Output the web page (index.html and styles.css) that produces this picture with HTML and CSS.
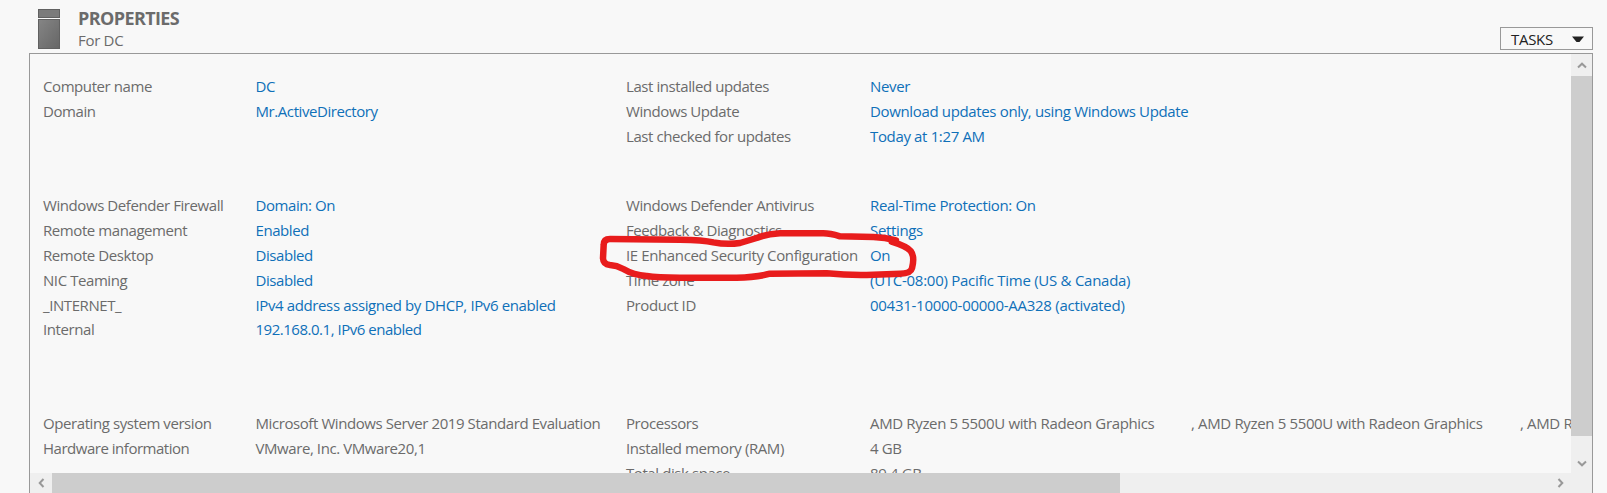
FILE: index.html
```html
<!DOCTYPE html>
<html lang="en">
<head>
<meta charset="utf-8">
<title>Properties</title>
<link rel="stylesheet" href="styles.css">
</head>
<body>
<header class="header">
  <svg class="server" viewBox="0 0 22 40" width="22" height="40">
    <defs><linearGradient id="g" x1="0" y1="0" x2="1" y2="1"><stop offset="0" stop-color="#858585"/><stop offset="1" stop-color="#666"/></linearGradient></defs>
    <rect x=".5" y=".5" width="21" height="8" fill="#7b7b7b" stroke="#616161"/>
    <rect x=".5" y="10.5" width="21" height="29" fill="url(#g)" stroke="#616161"/>
  </svg>
  <div class="titles">
    <h1 class="title">PROPERTIES</h1>
    <div class="subtitle">For DC</div>
  </div>
  <button class="tasks"><span>TASKS</span><svg width="12" height="7" viewBox="0 0 12 7"><path d="M0 .5H12L7.500 6H4.500Z" fill="#222"/></svg></button>
</header>
<main class="panel">
  <div class="view">
    <section class="group first">
      <dl class="list left">
        <dt>Computer name</dt><dd class="link">DC</dd>
        <dt>Domain</dt><dd class="link">Mr.ActiveDirectory</dd>
      </dl>
      <dl class="list right">
        <dt>Last installed updates</dt><dd class="link">Never</dd>
        <dt>Windows Update</dt><dd class="link">Download updates only, using Windows Update</dd>
        <dt>Last checked for updates</dt><dd class="link">Today at 1:27 AM</dd>
      </dl>
    </section>
    <section class="group second">
      <dl class="list left adapters">
        <dt>Windows Defender Firewall</dt><dd class="link">Domain: On</dd>
        <dt>Remote management</dt><dd class="link">Enabled</dd>
        <dt>Remote Desktop</dt><dd class="link">Disabled</dd>
        <dt>NIC Teaming</dt><dd class="link">Disabled</dd>
        <dt>_INTERNET_</dt><dd class="link address">IPv4 address assigned by DHCP, IPv6 enabled</dd>
        <dt>Internal</dt><dd class="link numeric">192.168.0.1, IPv6 enabled</dd>
      </dl>
      <dl class="list right">
        <dt>Windows Defender Antivirus</dt><dd class="link">Real-Time Protection: On</dd>
        <dt>Feedback &amp; Diagnostics</dt><dd class="link">Settings</dd>
        <dt class="address">IE Enhanced Security Configuration</dt><dd class="link">On</dd>
        <dt>Time zone</dt><dd class="link wide">(UTC-08:00) Pacific Time (US &amp; Canada)</dd>
        <dt>Product ID</dt><dd class="link wide">00431-10000-00000-AA328 (activated)</dd>
      </dl>
    </section>
    <section class="group third">
      <dl class="list left">
        <dt>Operating system version</dt><dd>Microsoft Windows Server 2019 Standard Evaluation</dd>
        <dt class="numeric">Hardware information</dt><dd>VMware, Inc. VMware20,1</dd>
      </dl>
      <dl class="list right">
        <dt>Processors</dt><dd class="cpus"><span class="cpu">AMD Ryzen 5 5500U with Radeon Graphics</span><span class="cpu next">, AMD Ryzen 5 5500U with Radeon Graphics</span><span class="cpu next">, AMD R</span></dd>
        <dt>Installed memory (RAM)</dt><dd>4 GB</dd>
        <dt>Total disk space</dt><dd>89.4 GB</dd>
      </dl>
    </section>
  </div>
  <div class="vbar">
    <div class="arrow"><svg width="10" height="7" viewBox="0 0 10 7"><path d="M1 5.500L5 1.700L9 5.500"/></svg></div>
    <div class="vthumb"></div>
    <div class="arrow down"><svg width="10" height="7" viewBox="0 0 10 7"><path d="M1 1.500L5 5.300L9 1.500"/></svg></div>
  </div>
  <div class="hbar">
    <div class="arrow"><svg width="7" height="10" viewBox="0 0 7 10"><path d="M5.500 1L1.700 5L5.500 9"/></svg></div>
    <div class="hthumb"></div>
    <div class="arrow end"><svg width="7" height="10" viewBox="0 0 7 10"><path d="M1.500 1L5.300 5L1.500 9"/></svg></div>
  </div>
</main>
<svg class="marker" viewBox="0 0 1080 240" width="360" height="80">
  <path d="M948 76Q915 67 880 66L780 64Q750 55 730 55L600 55Q560 57 530 69L480 84Q440 90 400 82Q370 75 300 74L90 72Q71 72 71 90L69 130Q70 148 90 150Q110 151 130 162Q160 180 200 183Q230 188 300 188L470 188Q530 187 570 176L740 175Q800 181 860 180L960 176Q992 176 996 160Q1005 125 992 108Q980 94 935 80"/>
</svg>
</body>
</html>
```
FILE: styles.css
```css
* { box-sizing: border-box; }
body {
  margin: 0;
  width: 1607px;
  height: 493px;
  overflow: hidden;
  background: #f8f8f8;
  color: #6b6b6b;
  font: 15px/25px "Open Sans", "Noto Sans", sans-serif;
  letter-spacing: -0.3px;
}
.header { display: flex; height: 53px; padding: 9px 14px 0 38px; }
.server { flex: none; }
.titles { margin: -1px 0 0 18px; }
.title { margin: 0; font-size: 18px; line-height: 20px; font-weight: 700; letter-spacing: -0.6px; }
.subtitle { line-height: 24px; }
.tasks {
  display: flex;
  align-items: center;
  justify-content: space-between;
  width: 93px;
  height: 23px;
  margin: 18px 0 0 auto;
  padding: 1px 8px 0 10px;
  border: 1px solid #999;
  background: #f8f8f8;
  color: #222;
  font: inherit;
  line-height: 20px;
  letter-spacing: -0.3px;
}
.panel {
  display: grid;
  grid-template: 419px 20px / 1fr 21px;
  width: 1564px;
  height: 440px;
  margin-left: 29px;
  border: 1px solid #999;
  border-bottom: 0;
}
.view { overflow: hidden; min-width: 0; padding: 20px 0 0 13px; }
.group { display: grid; grid-template-columns: 583px 1fr; align-items: start; }
.first { height: 119px; }
.second { height: 218px; }
.list { display: grid; grid-auto-rows: 25px; margin: 0; white-space: nowrap; letter-spacing: -0.42px; }
.adapters { grid-template-rows: repeat(4, 25px) 24px; }
.left { grid-template-columns: 212.5px 370.5px; }
.right { grid-template-columns: 244px 1fr; }
.right dd { letter-spacing: -0.35px; }
.right .wide { letter-spacing: -0.27px; }
.left .numeric { letter-spacing: -0.48px; }
.list .address { letter-spacing: -0.38px; }
dd { margin: 0; }
.link { color: #0f70b8; }
.cpus { display: flex; }
.cpu { flex: none; width: 321px; }
.cpu.next { width: 329px; }
.vbar { display: flex; flex-direction: column; background: #efefef; }
.vthumb { height: 360px; background: #cdcdcd; }
.arrow { display: flex; flex: none; align-items: center; justify-content: center; width: 21px; height: 22px; }
.arrow path { fill: none; stroke: #999; stroke-width: 2; }
.down { height: 20px; margin-top: auto; }
.hbar { display: flex; grid-column: 1 / 3; padding-left: 1px; padding-right: 21px; background: #efefef; }
.hbar .arrow { height: 20px; }
.hthumb { width: 1068px; background: #cdcdcd; }
.end { margin-left: auto; }
.marker { position: absolute; left: 580px; top: 215px; overflow: visible; }
.marker path { fill: none; stroke: #e81c1c; stroke-width: 19.5; stroke-linecap: round; stroke-linejoin: round; }
```
